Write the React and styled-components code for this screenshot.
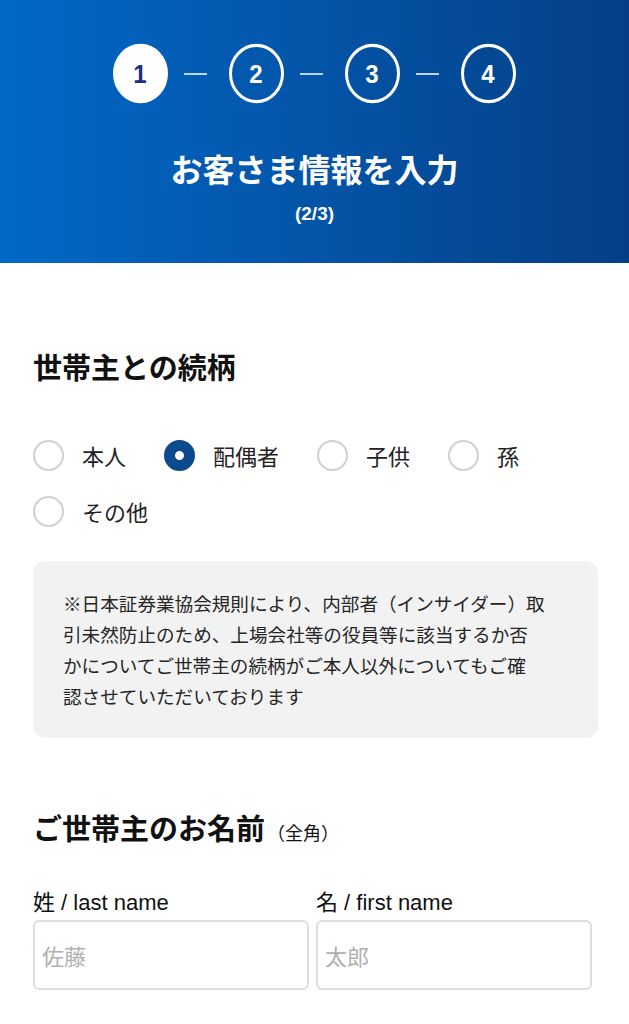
import React from 'react';
import styled, { createGlobalStyle } from 'styled-components';

const GlobalStyle = createGlobalStyle`
  body {
    margin: 0;
    background: #fff;
    font-family: "Noto Sans CJK JP", "Noto Sans", sans-serif;
    color: #111;
  }
`;

const steps = [1, 2, 3, 4];
const relations = ['本人', '配偶者', '子供', '孫', 'その他'];
const noteLines = [
  '※日本証券業協会規則により、内部者（インサイダー）取',
  '引未然防止のため、上場会社等の役員等に該当するか否',
  'かについてご世帯主の続柄がご本人以外についてもご確',
  '認させていただいております',
];

const App = () => {
  return (
    <StyledApp>
      <GlobalStyle />
      <StyledHeader>
        <StyledSteps>
          {steps.map((n, i) => (
            <React.Fragment key={n}>
              {i > 0 && <StyledDash />}
              <StyledStep active={n === 1}>{n}</StyledStep>
            </React.Fragment>
          ))}
        </StyledSteps>
        <StyledTitle>お客さま情報を入力</StyledTitle>
        <StyledSub>(2/3)</StyledSub>
      </StyledHeader>

      <StyledMain>
        <StyledHeading>世帯主との続柄</StyledHeading>
        <StyledRadios>
          {relations.map((r) => (
            <StyledRadio key={r}>
              <StyledDot checked={r === '配偶者'} />
              <span>{r}</span>
            </StyledRadio>
          ))}
        </StyledRadios>
        <StyledNote>
          {noteLines.map((l) => (
            <StyledNoteLine key={l}>{l}</StyledNoteLine>
          ))}
        </StyledNote>

        <StyledHeading second>
          ご世帯主のお名前<small>（全角）</small>
        </StyledHeading>
        <StyledFields>
          <StyledField>
            <label>姓 / last name</label>
            <StyledInput placeholder="佐藤" />
          </StyledField>
          <StyledField>
            <label>名 / first name</label>
            <StyledInput placeholder="太郎" />
          </StyledField>
        </StyledFields>
      </StyledMain>
    </StyledApp>
  );
};

const StyledApp = styled.div`
  min-height: 100vh;
`;

const StyledHeader = styled.header`
  height: 263px;
  box-sizing: border-box;
  padding-top: 46px;
  background: linear-gradient(90deg, #0069c6 0%, #0454a8 50%, #043f85 100%);
  color: #fff;
  display: flex;
  flex-direction: column;
  align-items: center;
`;

const StyledSteps = styled.div`
  display: flex;
  align-items: center;
  margin-left: -1px;
`;

const StyledStep = styled.div`
  width: 55px;
  height: 55px;
  box-sizing: border-box;
  border-radius: 50%;
  border: 3px solid #fff;
  background: ${(p) => (p.active ? '#fff' : 'transparent')};
  color: ${(p) => (p.active ? '#1b2f86' : '#fff')};
  display: flex;
  align-items: center;
  justify-content: center;
  font-family: "Liberation Sans", Arial, sans-serif;
  font-weight: 700;
  font-size: 24px;
  transform: scaleY(1.08);
`;

const StyledDash = styled.div`
  width: 23px;
  height: 2px;
  margin: 0 22px 0 16px;
  background: rgba(255, 255, 255, 0.75);
`;

const StyledTitle = styled.h1`
  margin: 47px 0 0;
  font-size: 32px;
  font-weight: 700;
  line-height: 40px;
`;

const StyledSub = styled.div`
  margin-top: 15px;
  font-family: "Liberation Sans", Arial, sans-serif;
  font-size: 19px;
  font-weight: 700;
  line-height: 22px;
`;

const StyledMain = styled.main`
  padding: 0 31px 0 33px;
`;

const StyledHeading = styled.h2`
  margin: ${(p) => (p.second ? '71px 0 0' : '85px 0 0')};
  font-size: 29px;
  font-weight: 700;
  line-height: 36px;
  color: #111;
  small {
    font-size: 18px;
    font-weight: 400;
    margin-left: 2px;
  }
`;

const StyledRadios = styled.div`
  display: flex;
  flex-wrap: wrap;
  column-gap: 38px;
  row-gap: 25px;
  margin-top: 56px;
`;

const StyledRadio = styled.label`
  display: flex;
  align-items: center;
  gap: 18px;
  font-size: 22px;
  line-height: 31px;
  color: #222;
`;

const StyledDot = styled.span`
  width: 31px;
  height: 31px;
  box-sizing: border-box;
  border-radius: 50%;
  border: ${(p) => (p.checked ? '11px solid #0b4a8c' : '2px solid #d0d0d0')};
  background: #fff;
  flex-shrink: 0;
`;

const StyledNote = styled.div`
  margin-top: 34px;
  width: 565px;
  box-sizing: border-box;
  background: #f2f2f2;
  border-radius: 12px;
  padding: 26px 20px 27px 30px;
  font-size: 18.6px;
  line-height: 31px;
  color: #262626;
`;

const StyledNoteLine = styled.div`
  white-space: nowrap;
`;

const StyledFields = styled.div`
  display: grid;
  grid-template-columns: 276px 276px;
  column-gap: 7px;
  margin-top: 40px;
`;

const StyledField = styled.div`
  display: flex;
  flex-direction: column;
  label {
    font-family: "Liberation Sans", "Noto Sans CJK JP", sans-serif;
    font-size: 22px;
    line-height: 26px;
    color: #111;
    margin-bottom: 4px;
  }
`;

const StyledInput = styled.input`
  height: 70px;
  box-sizing: border-box;
  border: 2px solid #dedede;
  border-radius: 6px;
  padding: 0 7px;
  font-family: "Noto Sans CJK JP", sans-serif;
  font-size: 22px;
  outline: none;
  &::placeholder {
    color: #b0b0b0;
  }
`;

export default App;
